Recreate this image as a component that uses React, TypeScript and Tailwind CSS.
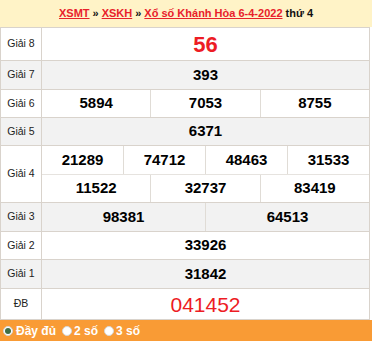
import React from 'react';

interface Prize {
    label: string;
    rows: string[][];
    height: string;
    gray: boolean;
    kind?: 'big' | 'special';
}

const prizes: Prize[] = [
    { label: 'Giải 8', rows: [['56']], height: 'h-[33px]', gray: false, kind: 'big' },
    { label: 'Giải 7', rows: [['393']], height: 'h-[29px]', gray: true },
    { label: 'Giải 6', rows: [['5894', '7053', '8755']], height: 'h-[28px]', gray: false },
    { label: 'Giải 5', rows: [['6371']], height: 'h-[28px]', gray: true },
    { label: 'Giải 4', rows: [['21289', '74712', '48463', '31533'], ['11522', '32737', '83419']], height: 'h-[57px]', gray: false },
    { label: 'Giải 3', rows: [['98381', '64513']], height: 'h-[29px]', gray: true },
    { label: 'Giải 2', rows: [['33926']], height: 'h-[28px]', gray: false },
    { label: 'Giải 1', rows: [['31842']], height: 'h-[29px]', gray: true },
    { label: 'ĐB', rows: [['041452']], height: 'h-[31px]', gray: false, kind: 'special' },
];

const numClass = (kind?: string) => {
    if (kind === 'big') return 'text-[22px] font-bold text-[#ed1c24]';
    if (kind === 'special') return 'text-[21px] text-[#ed1c24]';
    return 'text-[15px] font-bold text-black';
};

const Radio = ({ checked }: { checked?: boolean }) => (
    <span className="w-[10px] h-[10px] rounded-full bg-white border border-[#d6d6d6] flex items-center justify-center">
        {checked && <span className="w-[6px] h-[6px] rounded-full bg-[#3f6e45]" />}
    </span>
);

const App: React.FC = () => {
    return (
        <div className="w-[372px] h-[341px] bg-white overflow-hidden" style={{ fontFamily: '"Liberation Sans", Arial, sans-serif' }}>
            <div className="h-[27px] bg-[#fff3c7] flex items-center justify-center text-[11px] font-bold text-[#111]">
                <a className="text-[#e8212b] underline">XSMT</a>
                <span className="mx-[3px]">»</span>
                <a className="text-[#e8212b] underline">XSKH</a>
                <span className="mx-[3px]">»</span>
                <a className="text-[#e8212b] underline">Xổ số Khánh Hòa 6-4-2022</a>
                <span className="ml-[3px]">thứ 4</span>
            </div>
            <div className="w-[370px] border-t border-l border-r border-[#d9d3cc]">
                {prizes.map((p) => (
                    <div key={p.label} className={`flex border-b border-[#d9d3cc] ${p.height} ${p.gray ? 'bg-[#f2f2f2]' : 'bg-white'}`}>
                        <div className="w-[41px] shrink-0 border-r border-[#d9d3cc] flex items-center justify-center text-[10.5px] text-[#222]">
                            {p.label}
                        </div>
                        <div className="flex-1 flex flex-col">
                            {p.rows.map((r, ri) => (
                                <div key={ri} className={`flex-1 flex ${ri > 0 ? 'border-t border-[#e6e3df]' : ''}`}>
                                    {r.map((n, ni) => (
                                        <div
                                            key={n}
                                            className={`flex-1 flex items-center justify-center ${ni > 0 ? 'border-l border-[#e0dcd6]' : ''} ${numClass(p.kind)}`}
                                        >
                                            {n}
                                        </div>
                                    ))}
                                </div>
                            ))}
                        </div>
                    </div>
                ))}
            </div>
            <div className="h-[21px] bg-[#f99b35] flex items-center pl-[3px] text-[12px] font-bold text-white">
                <Radio checked />
                <span className="ml-[3px] mr-[6px]">Đầy đủ</span>
                <Radio />
                <span className="ml-[2px] mr-[6px]">2 số</span>
                <Radio />
                <span className="ml-[2px]">3 số</span>
            </div>
        </div>
    );
};

export default App;
